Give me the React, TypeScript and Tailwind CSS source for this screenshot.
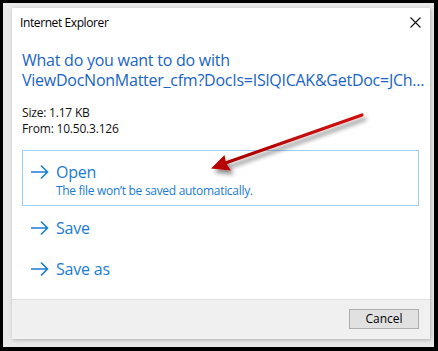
import React from "react";

const Arrow = () => (
  <svg width="19" height="16" viewBox="0 0 19 16" className="shrink-0">
    <path d="M1 8 H17.5 M11 1.5 L17.5 8 L11 14.5" fill="none" stroke="#1a7bd4" strokeWidth="1.6" />
  </svg>
);

export default function App() {
  const font = { fontFamily: '"Open Sans", "Noto Sans", sans-serif' };
  return (
    <div className="relative w-[438px] h-[351px] bg-black pt-[3px] pl-[3px] pr-[4px] pb-[4px]" style={font}>
      <div className="w-full h-full bg-[#e9e9e9] pt-[5px] pl-[9px] pr-[4px] pb-[8px]">
        <div className="w-full h-full bg-white flex flex-col shadow-[1px_1px_4px_rgba(0,0,0,0.25)]">
          <div className="h-[29px] flex items-center justify-between pl-[8px] pr-[9px] shrink-0">
            <span className="text-[12px] text-black tracking-[-0.4px]">Internet Explorer</span>
            <svg width="11" height="11" viewBox="0 0 11 11">
              <path d="M0.5 0.5 L10.5 10.5 M10.5 0.5 L0.5 10.5" stroke="#111" strokeWidth="1.1" />
            </svg>
          </div>
          <div className="mt-[13px] pl-[10px] text-[16px] leading-[20px] text-[#1964c4] tracking-[-0.25px]">
            <div>What do you want to do with</div>
            <div className="whitespace-nowrap">ViewDocNonMatter_cfm?DocIs=ISlQICAK&amp;GetDoc=JCh...</div>
          </div>
          <div className="mt-[15px] pl-[10px] text-[12px] leading-[16px] text-[#111] tracking-[-0.2px]">
            <div>Size: 1.17 KB</div>
            <div>From: 10.50.3.126</div>
          </div>
          <div className="mt-[13px] mx-[10px] border border-[#9ed0f5] pt-[10px] pb-[6px] pl-[7px] w-[397px]">
            <div className="flex items-center h-[22px]">
              <Arrow />
              <span className="ml-[7px] text-[16px] text-[#1a7bd4] tracking-[-0.2px]">Open</span>
            </div>
            <div className="pl-[26px] text-[12px] leading-[16px] text-[#1a7bd4] tracking-[-0.3px]">
              The file won’t be saved automatically.
            </div>
          </div>
          <div className="mx-[10px] pt-[11px] pb-[8px] pl-[8px]">
            <div className="flex items-center h-[22px]">
              <Arrow />
              <span className="ml-[7px] text-[16px] text-[#1a7bd4] tracking-[-0.2px]">Save</span>
            </div>
          </div>
          <div className="mx-[10px] pt-[11px] pb-[8px] pl-[8px]">
            <div className="flex items-center h-[22px]">
              <Arrow />
              <span className="ml-[7px] text-[16px] text-[#1a7bd4] tracking-[-0.2px]">Save as</span>
            </div>
          </div>
          <div className="flex-1" />
          <div className="h-[40px] shrink-0 bg-[#f0f0f0] border-t border-[#dfdfdf] flex items-start justify-end pr-[11px] pt-[9px]">
            <button className="w-[70px] h-[20px] bg-[#e1e1e1] border border-[#adadad] text-[12px] text-black leading-none flex items-center justify-center">
              Cancel
            </button>
          </div>
        </div>
      </div>
      <svg className="absolute left-0 top-0 pointer-events-none" width="438" height="351">
        <defs>
          <filter id="sh" x="-20%" y="-20%" width="140%" height="160%">
            <feDropShadow dx="3" dy="4" stdDeviation="2" floodColor="#000" floodOpacity="0.45" />
          </filter>
          <linearGradient id="rg" x1="0" y1="0" x2="0" y2="1">
            <stop offset="0" stopColor="#d41010" />
            <stop offset="1" stopColor="#a80000" />
          </linearGradient>
        </defs>
        <g filter="url(#sh)">
          <line x1="362" y1="115" x2="224" y2="163.5" stroke="url(#rg)" strokeWidth="3.2" strokeLinecap="round" />
          <path d="M211 168.5 L224.5 155 L226 163 L231 170.5 Z" fill="#b80000" />
        </g>
      </svg>
    </div>
  );
}
